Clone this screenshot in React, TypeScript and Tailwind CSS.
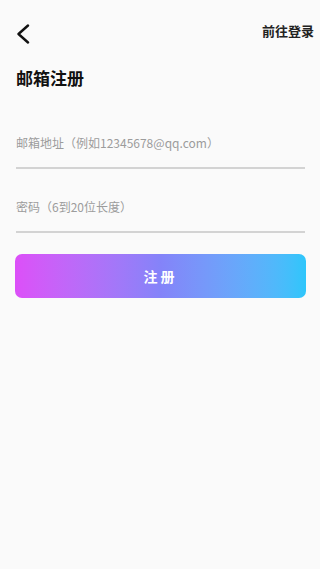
import React from 'react';

const font = { fontFamily: '"Noto Sans CJK SC", "Noto Sans", sans-serif' };

const BackIcon = () => (
  <svg width="14" height="20" viewBox="0 0 14 20" fill="none" xmlns="http://www.w3.org/2000/svg">
    <path d="M12 1.5L2.5 10L12 18.5" stroke="#111" strokeWidth="2.4" strokeLinecap="round" strokeLinejoin="round" />
  </svg>
);

const Field: React.FC<{ placeholder: string; type?: string; className?: string }> = ({ placeholder, type = 'text', className = '' }) => (
  <div className={`h-[50px] border-b-2 border-[#d3d3d3] flex items-center ${className}`}>
    <input
      type={type}
      placeholder={placeholder}
      className="w-full bg-transparent outline-none text-[12px] text-[#333] placeholder:text-[#9c9c9c]"
      style={font}
    />
  </div>
);

const App: React.FC = () => {
  return (
    <div className="min-h-screen w-full bg-[#fafafa] pt-[11px]" style={font}>
      <header className="flex items-start justify-between h-[44px] pl-4 pr-[6px]">
        <button className="mt-[13px] flex items-center">
          <BackIcon />
        </button>
        <span className="mt-[10px] text-[13px] leading-[20px] font-bold text-[#222]">前往登录</span>
      </header>

      <h1 className="mt-[11px] pl-4 text-[17px] leading-[24px] font-bold text-[#111]">邮箱注册</h1>

      <div className="ml-4 mr-[15px]">
        <Field className="mt-[29px]" placeholder="邮箱地址（例如12345678@qq.com）" />
        <Field className="mt-[14px]" type="password" placeholder="密码（6到20位长度）" />
      </div>

      <div className="ml-[15px] mr-[14px] mt-[21px]">
        <button className="w-full h-[44px] rounded-[7px] bg-linear-to-r from-[#dc4ff8] via-[#8483f9] to-[#2dc6fb] text-white text-[14px] font-bold tracking-[3px] flex items-center justify-center">
          注册
        </button>
      </div>
    </div>
  );
};

export default App;
